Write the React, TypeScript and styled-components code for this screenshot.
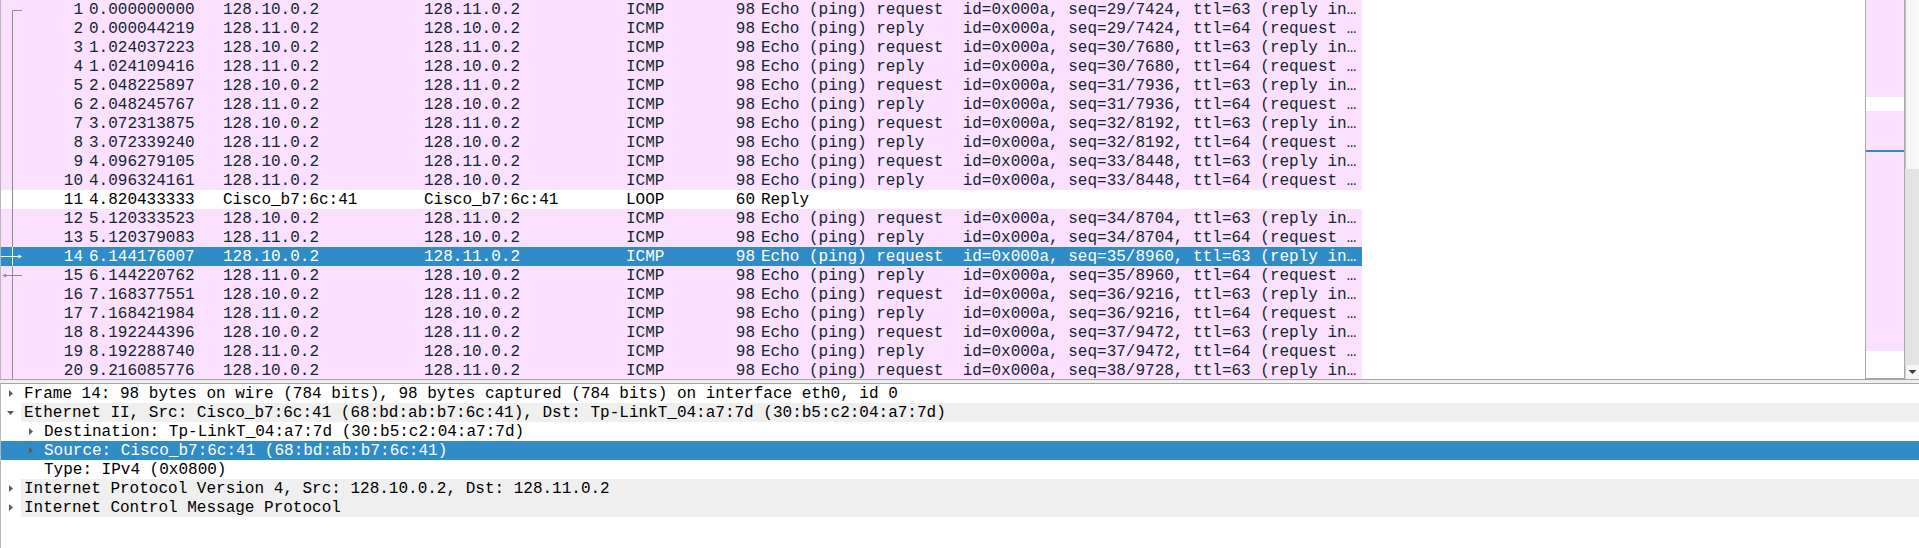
import React from "react";
import styled, { createGlobalStyle } from "styled-components";

const GlobalStyle = createGlobalStyle`
  html, body {
    margin: 0;
    padding: 0;
    background: #fff;
  }
  body {
    font-family: "Liberation Mono", monospace;
    font-size: 16px;
  }
`;

type Marker = "start" | "line" | "out" | "in";

type Packet = {
  no: number;
  time: string;
  src: string;
  dst: string;
  proto: string;
  len: number;
  info: string;
  icmp: boolean;
  marker: Marker;
};

const ping = (
  no: number,
  time: string,
  request: boolean,
  seq: string,
  other: number
): Packet => ({
  no,
  time,
  src: request ? "128.10.0.2" : "128.11.0.2",
  dst: request ? "128.11.0.2" : "128.10.0.2",
  proto: "ICMP",
  len: 98,
  info: request
    ? `Echo (ping) request  id=0x000a, seq=${seq}, ttl=63 (reply in ${other})`
    : `Echo (ping) reply    id=0x000a, seq=${seq}, ttl=64 (request in ${other})`,
  icmp: true,
  marker: no === 1 ? "start" : no === 14 ? "out" : no === 15 ? "in" : "line",
});

const packets: Packet[] = [
  ping(1, "0.000000000", true, "29/7424", 2),
  ping(2, "0.000044219", false, "29/7424", 1),
  ping(3, "1.024037223", true, "30/7680", 4),
  ping(4, "1.024109416", false, "30/7680", 3),
  ping(5, "2.048225897", true, "31/7936", 6),
  ping(6, "2.048245767", false, "31/7936", 5),
  ping(7, "3.072313875", true, "32/8192", 8),
  ping(8, "3.072339240", false, "32/8192", 7),
  ping(9, "4.096279105", true, "33/8448", 10),
  ping(10, "4.096324161", false, "33/8448", 9),
  {
    no: 11,
    time: "4.820433333",
    src: "Cisco_b7:6c:41",
    dst: "Cisco_b7:6c:41",
    proto: "LOOP",
    len: 60,
    info: "Reply",
    icmp: false,
    marker: "line",
  },
  ping(12, "5.120333523", true, "34/8704", 13),
  ping(13, "5.120379083", false, "34/8704", 12),
  ping(14, "6.144176007", true, "35/8960", 15),
  ping(15, "6.144220762", false, "35/8960", 14),
  ping(16, "7.168377551", true, "36/9216", 17),
  ping(17, "7.168421984", false, "36/9216", 16),
  ping(18, "8.192244396", true, "37/9472", 19),
  ping(19, "8.192288740", false, "37/9472", 18),
  ping(20, "9.216085776", true, "38/9728", 21),
];

const SELECTED = 14;

type Detail = {
  text: string;
  level: number;
  state: "open" | "closed" | "leaf";
  alt?: boolean;
  selected?: boolean;
};

const details: Detail[] = [
  {
    text: "Frame 14: 98 bytes on wire (784 bits), 98 bytes captured (784 bits) on interface eth0, id 0",
    level: 0,
    state: "closed",
  },
  {
    text: "Ethernet II, Src: Cisco_b7:6c:41 (68:bd:ab:b7:6c:41), Dst: Tp-LinkT_04:a7:7d (30:b5:c2:04:a7:7d)",
    level: 0,
    state: "open",
    alt: true,
  },
  { text: "Destination: Tp-LinkT_04:a7:7d (30:b5:c2:04:a7:7d)", level: 1, state: "closed" },
  { text: "Source: Cisco_b7:6c:41 (68:bd:ab:b7:6c:41)", level: 1, state: "closed", selected: true },
  { text: "Type: IPv4 (0x0800)", level: 1, state: "leaf" },
  {
    text: "Internet Protocol Version 4, Src: 128.10.0.2, Dst: 128.11.0.2",
    level: 0,
    state: "closed",
    alt: true,
  },
  { text: "Internet Control Message Protocol", level: 0, state: "closed", alt: true },
];

// minimap bands, top to bottom
const mapBands: { h: number; c: string }[] = [
  { h: 97, c: "#fce0ff" },
  { h: 14, c: "#ffffff" },
  { h: 39, c: "#fce0ff" },
  { h: 2, c: "#308cc6" },
  { h: 199, c: "#fce0ff" },
  { h: 27, c: "#ffffff" },
];

const RelationMark = ({ marker, selected }: { marker: Marker; selected: boolean }) => {
  const stroke = selected ? "#ffffff" : "#8c8c8c";
  return (
    <MarkSvg width="22" height="19" viewBox="0 0 22 19">
      {marker === "start" ? (
        <path d="M11.5 19 V10.5 H21" fill="none" stroke={stroke} />
      ) : (
        <path d="M11.5 0 V19" fill="none" stroke={stroke} />
      )}
      {marker === "out" && (
        <>
          <path d="M0 9.5 H19" fill="none" stroke={stroke} />
          <path d="M17.5 7.5 L21 9.5 L17.5 11.5 Z" fill={stroke} />
        </>
      )}
      {marker === "in" && (
        <>
          <path d="M4 9.5 H21" fill="none" stroke={stroke} />
          <path d="M5 7.5 L1.5 9.5 L5 11.5 Z" fill={stroke} />
        </>
      )}
    </MarkSvg>
  );
};

const Expander = ({ state }: { state: Detail["state"] }) => {
  if (state === "leaf") return null;
  return (
    <svg width="9" height="9" viewBox="0 0 9 9">
      {state === "closed" ? (
        <path d="M3 1 L7 4.5 L3 8 Z" fill="#5c5c5c" />
      ) : (
        <path d="M1 3 L8 3 L4.5 7 Z" fill="#5c5c5c" />
      )}
    </svg>
  );
};

const App = () => {
  return (
    <Page>
      <GlobalStyle />
      <PacketPane>
        <PacketList>
          {packets.map((p) => {
            const selected = p.no === SELECTED;
            return (
              <PacketRow key={p.no} $icmp={p.icmp} $selected={selected}>
                <NoCell>
                  <RelationMark marker={p.marker} selected={selected} />
                  <span>{p.no}</span>
                </NoCell>
                <Cell>{p.time}</Cell>
                <Cell>{p.src}</Cell>
                <Cell>{p.dst}</Cell>
                <Cell>{p.proto}</Cell>
                <Cell $right>{p.len}</Cell>
                <Cell>{p.info}</Cell>
              </PacketRow>
            );
          })}
        </PacketList>
        <Minimap>
          {mapBands.map((b, i) => (
            <MapBand key={i} $h={b.h} $c={b.c} />
          ))}
        </Minimap>
        <ScrollBar>
          <Thumb />
          <Track />
          <ArrowButton>
            <svg width="9" height="6" viewBox="0 0 9 6">
              <path d="M0.5 1 L8.5 1 L4.5 5 Z" fill="#3a3a3a" />
            </svg>
          </ArrowButton>
        </ScrollBar>
      </PacketPane>
      <Splitter />
      <DetailPane>
        {details.map((d, i) => (
          <DetailRow key={i} $selected={!!d.selected}>
            <Branch $level={d.level}>
              <ArrowSlot>
                <Expander state={d.state} />
              </ArrowSlot>
            </Branch>
            <DetailText $alt={!!d.alt && !d.selected} $selected={!!d.selected}>
              {d.text}
            </DetailText>
          </DetailRow>
        ))}
      </DetailPane>
    </Page>
  );
};

export default App;

const Page = styled.div`
  width: 1919px;
  height: 548px;
  overflow: hidden;
  display: flex;
  flex-direction: column;
  background: #fff;
  font-family: "Liberation Mono", monospace;
  font-size: 16px;
`;

const PacketPane = styled.div`
  display: flex;
  height: 380px;
  flex: none;
  box-sizing: border-box;
  border-bottom: 1px solid #a6a6a6;
`;

const PacketList = styled.div`
  flex: 1;
  min-width: 0;
  overflow: hidden;
  border-left: 1px solid #b8b8b8;
  display: flex;
  flex-direction: column;
`;

const PacketRow = styled.div<{ $icmp: boolean; $selected: boolean }>`
  display: grid;
  grid-template-columns: 85px 134px 201px 202px 77px 58px 604px;
  width: 1361px;
  height: 19px;
  flex: none;
  box-sizing: border-box;
  padding-top: 1px;
  line-height: 18px;
  background: ${(p) => (p.$selected ? "#308cc6" : p.$icmp ? "#fce0ff" : "#ffffff")};
  color: ${(p) => (p.$selected ? "#ffffff" : p.$icmp ? "#12272e" : "#000000")};
`;

const Cell = styled.div<{ $right?: boolean }>`
  padding: 0 3px;
  overflow: hidden;
  white-space: pre;
  text-overflow: ellipsis;
  text-align: ${(p) => (p.$right ? "right" : "left")};
`;

const NoCell = styled.div`
  display: flex;
  justify-content: space-between;
  align-items: flex-start;
  padding-right: 3px;
  white-space: pre;
`;

const MarkSvg = styled.svg`
  display: block;
  flex: none;
  margin-top: -1px;
`;

const Minimap = styled.div`
  width: 40px;
  height: 379px;
  flex: none;
  box-sizing: border-box;
  border-left: 1px solid #a8a8a8;
  border-right: 1px solid #a8a8a8;
  border-bottom: 1px solid #a8a8a8;
  display: flex;
  flex-direction: column;
  overflow: hidden;
`;

const MapBand = styled.div<{ $h: number; $c: string }>`
  height: ${(p) => p.$h}px;
  flex: none;
  background: ${(p) => p.$c};
`;

const ScrollBar = styled.div`
  width: 14px;
  height: 379px;
  flex: none;
  display: flex;
  flex-direction: column;
  background: #e3e3e3;
`;

const Thumb = styled.div`
  height: 169px;
  flex: none;
  box-sizing: border-box;
  border-left: 1px solid #c4c4c4;
  background: linear-gradient(to right, #f4f4f4, #f9f9f9);
`;

const Track = styled.div`
  flex: 1;
`;

const ArrowButton = styled.div`
  height: 14px;
  flex: none;
  display: flex;
  align-items: center;
  justify-content: center;
  background: #f6f6f6;
  border-left: 1px solid #d0d0d0;
`;

const Splitter = styled.div`
  height: 3px;
  flex: none;
  background: #efefef;
`;

const DetailPane = styled.div`
  flex: 1;
  border-top: 1px solid #a6a6a6;
  border-left: 1px solid #b8b8b8;
  display: flex;
  flex-direction: column;
`;

const DetailRow = styled.div<{ $selected: boolean }>`
  display: flex;
  height: 19px;
  flex: none;
  background: ${(p) => (p.$selected ? "#308cc6" : "transparent")};
`;

const Branch = styled.div<{ $level: number }>`
  width: ${(p) => 20 * (p.$level + 1)}px;
  flex: none;
  display: flex;
  justify-content: flex-end;
`;

const ArrowSlot = styled.div`
  width: 20px;
  display: flex;
  align-items: center;
  justify-content: center;
  padding-right: 1px;
  box-sizing: border-box;
`;

const DetailText = styled.div<{ $alt: boolean; $selected: boolean }>`
  flex: 1;
  padding: 1px 0 0 3px;
  box-sizing: border-box;
  line-height: 18px;
  white-space: pre;
  overflow: hidden;
  background: ${(p) => (p.$alt ? "#efefef" : "transparent")};
  color: ${(p) => (p.$selected ? "#ffffff" : "#000000")};
`;
